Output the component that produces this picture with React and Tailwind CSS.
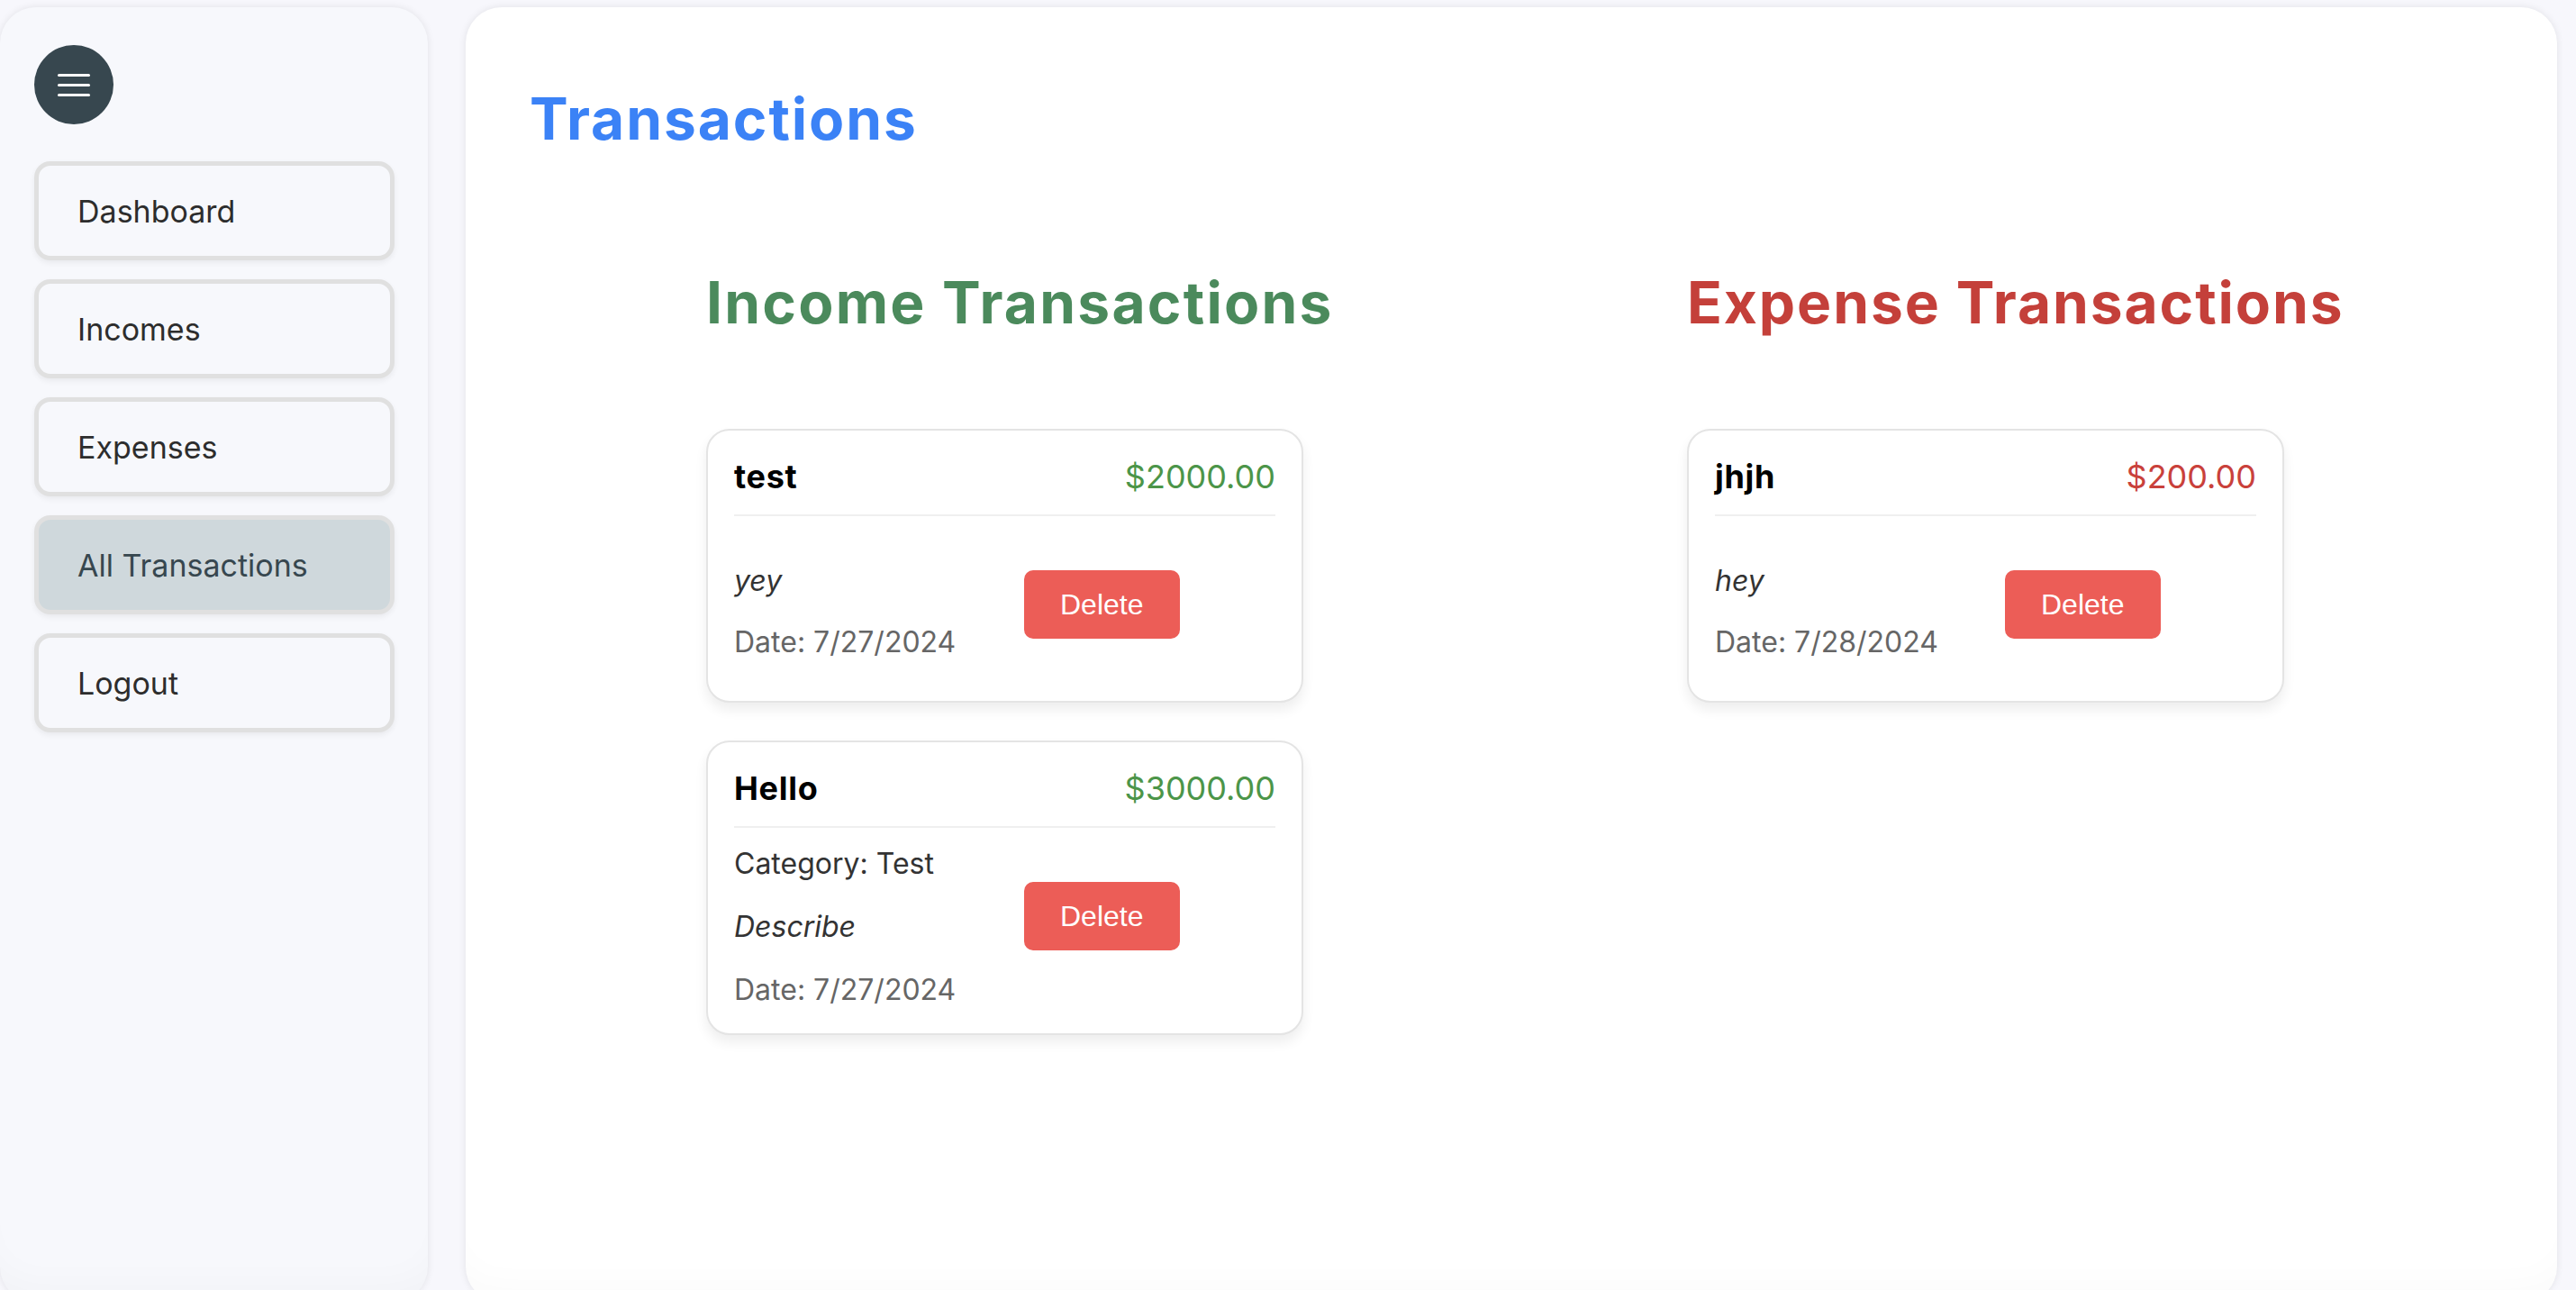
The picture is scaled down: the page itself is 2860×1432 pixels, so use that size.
import React from 'react';

const font = { fontFamily: 'Inter, "Noto Sans", sans-serif' };

const navItems = ['Dashboard', 'Incomes', 'Expenses', 'All Transactions', 'Logout'];

const incomes = [
    { id: 1, title: 'test', amount: '$2000.00', description: 'yey', date: '7/27/2024', body: 'pt-[52px] pb-[45px] gap-[28px]' },
    { id: 2, title: 'Hello', amount: '$3000.00', category: 'Test', description: 'Describe', date: '7/27/2024', body: 'pt-[20px] pb-[28px] gap-[30px]' },
];

const expenses = [
    { id: 3, title: 'jhjh', amount: '$200.00', description: 'hey', date: '7/28/2024', body: 'pt-[52px] pb-[45px] gap-[28px]' },
];

const TransactionCard = ({ tx, amountColor }) => (
    <div className="w-[663px] bg-white border-2 border-[#e4e4e4] rounded-[26px] px-[29px] pt-[29px] shadow-[0_8px_14px_rgba(0,0,0,0.07)]">
        <div className="flex justify-between items-center pb-[20px] border-b-2 border-[#efefef]">
            <span className="text-[36px] leading-[44px] font-bold text-black tracking-[0.02em]">{tx.title}</span>
            <span className={`text-[36px] leading-[44px] ${amountColor}`}>{tx.amount}</span>
        </div>
        <div className="flex items-start">
            <div className={`w-[322px] flex flex-col text-[32px] leading-[40px] ${tx.body}`}>
                {tx.category && <p className="text-[#333]">Category: {tx.category}</p>}
                <p className="italic text-[#333]">{tx.description}</p>
                <p className="text-[#666]">Date: {tx.date}</p>
            </div>
            <button
                className="mt-[60px] h-[76px] px-[40px] rounded-[10px] bg-[#ec5d57] text-white text-[32px]"
                style={{ fontFamily: '"Liberation Sans", Arial, sans-serif' }}
            >
                Delete
            </button>
        </div>
    </div>
);

const App = () => {
    return (
        <div className="w-[2860px] h-[1432px] overflow-hidden bg-[#f7f7fc] flex gap-[42px] pt-[8px]" style={font}>
            <aside className="w-[475px] h-[1438px] shrink-0 bg-[#f7f8fc] rounded-[40px] pl-[38px] pt-[42px] shadow-[0_0_8px_rgba(0,0,0,0.09),inset_0_-40px_40px_-20px_rgba(0,0,0,0.025)]">
                <div className="w-[88px] h-[88px] rounded-full bg-[#37474f] flex flex-col items-center justify-center gap-[8px]">
                    <span className="w-[36px] h-[3px] bg-white rounded-full"></span>
                    <span className="w-[36px] h-[3px] bg-white rounded-full"></span>
                    <span className="w-[36px] h-[3px] bg-white rounded-full"></span>
                </div>
                <nav className="mt-[41px] flex flex-col gap-[21px]">
                    {navItems.map(item => {
                        const active = item === 'All Transactions';
                        return (
                            <div
                                key={item}
                                className={`w-[400px] h-[110px] flex items-center pl-[43px] border-[5px] border-[#e0e0e0] rounded-[18px] text-[34px] shadow-[0_3px_6px_rgba(0,0,0,0.06)] ${active ? 'bg-[#cfd8dc] text-[#37474f]' : 'bg-[#f7f8fc] text-[#2d2d2d]'}`}
                            >
                                {item}
                            </div>
                        );
                    })}
                </nav>
            </aside>

            <main className="w-[2322px] h-[1438px] shrink-0 bg-white rounded-[40px] pl-[71px] pt-[85px] shadow-[0_0_8px_rgba(0,0,0,0.09),inset_0_-40px_40px_-20px_rgba(0,0,0,0.02)]">
                <h1 className="text-[64px] leading-[77px] font-bold text-[#3b82f6] tracking-[0.03em]">Transactions</h1>

                <div className="mt-[127px] ml-[196px] grid grid-cols-[1089px_1fr]">
                    <section>
                        <h2 className="text-[64px] leading-[77px] font-bold text-[#4b8a5c] tracking-[0.035em]">Income Transactions</h2>
                        <div className="mt-[102px] flex flex-col gap-[42px]">
                            {incomes.map(tx => (
                                <TransactionCard key={tx.id} tx={tx} amountColor="text-[#4c9549]" />
                            ))}
                        </div>
                    </section>
                    <section>
                        <h2 className="text-[64px] leading-[77px] font-bold text-[#c4403a] tracking-[0.03em]">Expense Transactions</h2>
                        <div className="mt-[102px] flex flex-col gap-[42px]">
                            {expenses.map(tx => (
                                <TransactionCard key={tx.id} tx={tx} amountColor="text-[#c9413b]" />
                            ))}
                        </div>
                    </section>
                </div>
            </main>
        </div>
    );
};

export default App;
